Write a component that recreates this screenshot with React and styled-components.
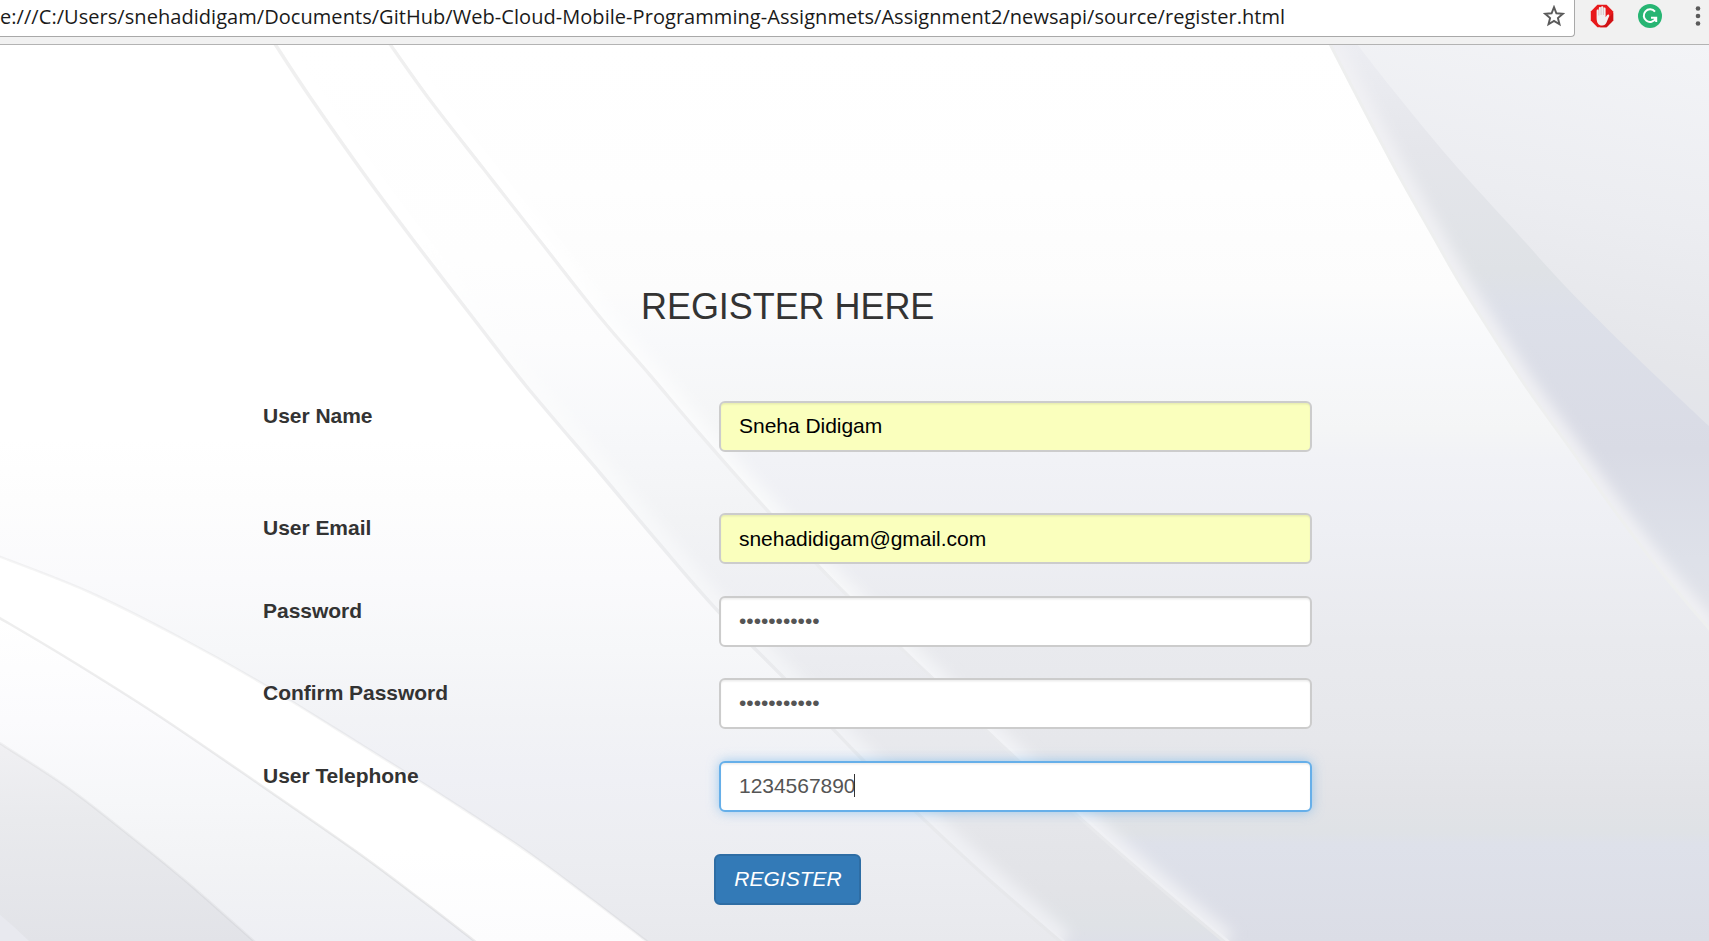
import React from "react";
import styled, { createGlobalStyle, css } from "styled-components";

const GlobalStyle = createGlobalStyle`
  * { box-sizing: border-box; }
  html, body { margin: 0; padding: 0; }
  body {
    background: #fff;
    color: #333;
    font-family: "Liberation Sans", Arial, Helvetica, sans-serif;
    font-size: 21px;
    line-height: 30px;
    overflow: hidden;
  }
`;

const Window = styled.div`
  display: flex;
  flex-direction: column;
  width: 1709px;
  height: 941px;
  overflow: hidden;
`;

const Toolbar = styled.header`
  display: flex;
  align-items: flex-start;
  flex: none;
  height: 45px;
  background: #f1f1f1;
  border-bottom: 1px solid #b3b3b3;
`;

const AddressBar = styled.div`
  display: flex;
  align-items: center;
  justify-content: space-between;
  flex: none;
  width: 1575px;
  height: 37px;
  padding: 0 9px 4px 0;
  background: #fff;
  border: solid #a9a9a9;
  border-width: 0 1px 1px 0;
  border-bottom-right-radius: 4px;
`;

const Url = styled.span`
  padding-top: 2px;
  color: #1a1a1a;
  font-family: "Open Sans", "Noto Sans", sans-serif;
  font-size: 20px;
  line-height: 30px;
  letter-spacing: 0.05px;
  white-space: nowrap;
`;

const Extensions = styled.div`
  display: flex;
  align-items: center;
  flex: none;
  height: 32px;
  padding-left: 15px;
`;

const Icon = styled.svg`
  display: block;
  flex: none;
  width: ${(p) => p.$size}px;
  height: ${(p) => p.$size}px;
  margin-right: ${(p) => p.$after || 0}px;
`;

const Page = styled.main`
  position: relative;
  flex: 1;
  padding-left: 263px;
`;

const Backdrop = styled.svg`
  position: absolute;
  inset: 0;
  width: 1709px;
  height: 896px;
`;

const Content = styled.div`
  position: relative;
  width: 1049px;
`;

const Title = styled.h2`
  margin: 0;
  padding: 242px 0 74px 378px;
  font-size: 36px;
  font-weight: 400;
  line-height: 40px;
  letter-spacing: -0.06px;
  white-space: nowrap;
`;

const Row = styled.div`
  display: flex;
  align-items: flex-start;
  margin-bottom: ${(p) => p.$after}px;
`;

const Label = styled.label`
  width: 456px;
  font-weight: 700;
  letter-spacing: -0.03px;
`;

const Field = styled.div`
  position: relative;
  flex: 1;
`;

const Input = styled.input`
  display: block;
  width: 100%;
  height: 51px;
  padding: ${(p) => p.$pad || "7px 18px 9px"};
  border: 2px solid #ccc;
  border-radius: 6px;
  outline: none;
  background: ${(p) => (p.$filled ? "#faffbd" : "#fff")};
  box-shadow: inset 0 1.5px 1.5px rgba(0, 0, 0, 0.075);
  color: ${(p) => (p.$filled ? "#000" : "#555")};
  font-family: inherit;
  font-size: 21px;
  line-height: 30px;
  letter-spacing: -0.03px;
  ${(p) =>
    p.$active &&
    css`
      border-color: #66afe9;
      box-shadow: inset 0 1.5px 1.5px rgba(0, 0, 0, 0.075), 0 0 12px rgba(102, 175, 233, 0.6);
    `}
`;

const Caret = styled.i`
  position: absolute;
  left: 135px;
  top: 13px;
  width: 1px;
  height: 23px;
  background: #333;
`;

const Submit = styled.button`
  display: block;
  width: 147px;
  height: 51px;
  margin-left: 451px;
  padding: 0 0 1px 1px;
  border: 2px solid #2e6da4;
  border-radius: 6px;
  background: #337ab7;
  color: #fff;
  font-family: inherit;
  font-size: 21px;
  font-style: italic;
  line-height: 30px;
`;

// Smooth curve through a list of points (Catmull-Rom converted to Béziers).
const curve = (pts) => {
  let d = `M${pts[0][0]} ${pts[0][1]}`;
  for (let i = 0; i < pts.length - 1; i++) {
    const a = pts[i - 1] || pts[i];
    const b = pts[i];
    const c = pts[i + 1];
    const e = pts[i + 2] || c;
    d += `C${b[0] + (c[0] - a[0]) / 6} ${b[1] + (c[1] - a[1]) / 6} ${c[0] - (e[0] - b[0]) / 6} ${c[1] - (e[1] - b[1]) / 6} ${c[0]} ${c[1]}`;
  }
  return d;
};

const ribbonLeft = curve([[275, 44], [310, 97], [367, 178], [417, 245], [477, 323], [527, 387], [600, 473], [657, 541], [717, 610], [787, 681], [860, 757], [917, 813], [986, 877], [1062, 943]]);
const ribbonRight = curve([[390, 44], [430, 100], [483, 168], [537, 237], [600, 317], [650, 375], [700, 434], [767, 510], [833, 581], [901, 648], [943, 688], [986, 730], [1076, 814], [1144, 874], [1226, 943]]);
const wingOuter = curve([[1330, 44], [1360, 102], [1397, 172], [1432, 234], [1457, 278], [1490, 331], [1527, 388], [1570, 448], [1617, 514], [1663, 574], [1711, 631]]);
const wingInner = curve([[1357, 44], [1393, 90], [1450, 159], [1517, 233], [1567, 288], [1633, 354], [1711, 428]]);
const arcTop = curve([[-2, 556], [89, 592], [179, 637], [263, 684], [357, 742], [446, 798], [536, 858], [649, 943]]);
const arcMiddle = curve([[-2, 617], [67, 658], [156, 714], [259, 784], [357, 852], [424, 902], [477, 943]]);
const arcLow = curve([[-2, 742], [67, 787], [129, 835], [188, 883], [256, 943]]);

const Fade = ({ id, from, to, stops }) => (
  <linearGradient id={id} gradientUnits="userSpaceOnUse" x1="0" x2="0" y1={from} y2={to}>
    {stops.map(([y, color]) => (
      <stop key={y} offset={(y - from) / (to - from)} stopColor={color} />
    ))}
  </linearGradient>
);

const Waves = () => (
  <Backdrop viewBox="0 45 1709 896" aria-hidden="true">
    <defs>
      <Fade id="base" from={44} to={941} stops={[[44, "#fff"], [440, "#fff"], [500, "#fdfdfd"], [580, "#fafafc"], [650, "#f6f7f9"], [720, "#f2f3f6"], [780, "#eff0f5"], [860, "#ecedf1"], [941, "#e8e9ed"]]} />
      <Fade id="ribbon" from={44} to={941} stops={[[44, "#fff"], [260, "#fefefe"], [340, "#fcfcfd"], [430, "#f7f8fa"], [520, "#f2f3f5"], [600, "#eeeff3"], [680, "#eaebef"], [800, "#e6e7eb"], [890, "#e2e3e7"], [925, "#dfe2e6"], [941, "#dee0e8"]]} />
      <Fade id="field" from={44} to={941} stops={[[44, "#fff"], [190, "#fefefe"], [290, "#fcfcfc"], [340, "#f8f9fb"], [430, "#f4f5f6"], [460, "#f1f2f6"], [530, "#eeeff4"], [640, "#e9eaee"], [740, "#e6e7eb"], [800, "#e2e3e7"], [832, "#dfe2e6"], [845, "#dee1ea"], [941, "#dbdde6"]]} />
      <Fade id="wing" from={44} to={640} stops={[[44, "#ecedf2"], [150, "#e5e6eb"], [270, "#dfe2e6"], [310, "#dde0e9"], [450, "#d9dbe5"], [560, "#dee1e9"], [640, "#e2e3e9"]]} />
      <linearGradient id="sky" gradientUnits="userSpaceOnUse" x1="1600" y1="20" x2="1520" y2="420">
        <stop offset="0" stopColor="#f3f4f7" />
        <stop offset="0.45" stopColor="#ecedf1" />
        <stop offset="0.8" stopColor="#e5e6ea" />
        <stop offset="1" stopColor="#e1e3ea" />
      </linearGradient>
      <Fade id="band" from={556} to={941} stops={[[556, "#fff"], [850, "#fff"], [941, "#fcfcfd"]]} />
      <Fade id="slope" from={617} to={941} stops={[[617, "#fff"], [720, "#fbfbfd"], [800, "#f6f7f9"], [870, "#f2f3f5"], [941, "#eeeff4"]]} />
      <Fade id="hill" from={742} to={941} stops={[[742, "#f0f0f3"], [820, "#e9eaed"], [941, "#e2e3e8"]]} />
      <Fade id="gleam" from={240} to={941} stops={[[240, "#fff"], [500, "#f8f9fa"], [700, "#f2f3f6"], [941, "#eeeff3"]]} />
      <Fade id="crease" from={44} to={941} stops={[[44, "#f0f0f0"], [350, "#efeff0"], [550, "#ecedef"], [700, "#e9eaed"], [800, "#e9eaed"], [941, "#e6e7ea"]]} />
      <clipPath id="clipRibbon"><path d={`${ribbonLeft}L1709 943V44Z`} /></clipPath>
      <clipPath id="clipField"><path d={`${ribbonRight}L1709 943V44Z`} /></clipPath>
      <clipPath id="clipWing"><path d={`${wingOuter}V44Z`} /></clipPath>
      <filter id="soft" filterUnits="userSpaceOnUse" x="0" y="0" width="1750" height="1000"><feGaussianBlur stdDeviation="7" /></filter>
    </defs>
    <rect y="44" width="1709" height="900" fill="url(#base)" />
    <g clipPath="url(#clipRibbon)">
      <path d={`${ribbonLeft}L1709 943V44Z`} fill="url(#ribbon)" />
      <path d={ribbonLeft} fill="none" stroke="url(#gleam)" strokeWidth="26" filter="url(#soft)" />
    </g>
    <g clipPath="url(#clipField)">
      <path d={`${ribbonRight}L1709 943V44Z`} fill="url(#field)" />
      <path d={ribbonRight} fill="none" stroke="url(#gleam)" strokeWidth="24" filter="url(#soft)" />
    </g>
    <path d={ribbonLeft} fill="none" stroke="url(#crease)" strokeWidth="3.500" />
    <path d={ribbonRight} fill="none" stroke="url(#crease)" strokeWidth="3.500" />
    <path d={ribbonLeft} transform="translate(3 -1)" fill="none" stroke="url(#gleam)" strokeOpacity="0.6" strokeWidth="2" />
    <path d={ribbonRight} transform="translate(3 -1)" fill="none" stroke="url(#gleam)" strokeWidth="2.5" />
    <g clipPath="url(#clipWing)">
      <path d={`${wingOuter}V44Z`} fill="url(#wing)" />
      <path d={wingOuter} fill="none" stroke="#f1f1f4" strokeWidth="20" filter="url(#soft)" />
      <path d={`${wingInner}V44Z`} fill="url(#sky)" />
    </g>
    <path d={wingOuter} fill="none" stroke="#eeefef" strokeWidth="3" />
    <path d={`${arcTop}H-2Z`} fill="url(#band)" />
    <path d={arcTop} fill="none" stroke="#777" strokeOpacity="0.07" strokeWidth="2.5" />
    <path d={`${arcMiddle}H-2Z`} fill="url(#slope)" />
    <path d={arcMiddle} fill="none" stroke="#777" strokeOpacity="0.12" strokeWidth="2.5" />
    <path d={`${arcLow}H-2Z`} fill="url(#hill)" />
    <path d={arcLow} fill="none" stroke="#777" strokeOpacity="0.07" strokeWidth="2.5" />
    <path d="M-2 913Q14 926 31 943H-2Z" fill="#e8e9ef" />
  </Backdrop>
);

const StarIcon = () => (
  <Icon $size={22} viewBox="0 0 22 22">
    <path d="M11 2.200 13.400 8.300 19.900 8.800 14.900 13 16.500 19.300 11 15.900 5.500 19.300 7.100 13 2.100 8.800 8.600 8.300Z" fill="none" stroke="#5a5a5a" strokeWidth="1.900" />
  </Icon>
);

const BlockIcon = () => (
  <Icon $size={24} $after={24} viewBox="0 0 24 24">
    <path d="M7.400.8h9.200l6.600 6.600v9.200l-6.600 6.600H7.400L.8 16.600V7.400Z" fill="#e8191b" />
    <path d="M23.200 9v7.600l-6.600 6.600H10Z" fill="#d01215" />
    <path d="M6.600 13.500V6.700c0-1.500 2.200-1.500 2.200 0V4.200c0-1.500 2.300-1.500 2.300 0v-.9c0-1.500 2.300-1.500 2.300 0v1.200c0-1.500 2.200-1.500 2.200 0v8.700l1.500-2.200c.9-1.200 2.600-.4 2.100 1l-2.700 6.500c-.9 2.100-2.200 3-4.300 3-3.900 0-5.600-2.600-5.600-8Z" fill="#f1f1f1" />
    <path d="M8.800 5.500v6M11.100 4v7M13.400 4v7" stroke="#c9a5a5" strokeWidth=".6" />
  </Icon>
);

const GrammarIcon = () => (
  <Icon $size={24} $after={24} viewBox="0 0 24 24">
    <circle cx="12" cy="12" r="12" fill="#27b573" />
    <path d="M17 7.700A6.300 6.300 0 1 0 17.700 14.500M13 13.700H18.200V18" fill="none" stroke="#fff" strokeWidth="2" />
  </Icon>
);

const MenuIcon = () => (
  <Icon $size={24} viewBox="0 0 24 24">
    <g fill="#5a5a5a">
      <circle cx="12" cy="4.500" r="2.300" />
      <circle cx="12" cy="12" r="2.300" />
      <circle cx="12" cy="19.500" r="2.300" />
    </g>
  </Icon>
);

const fields = [
  { id: "name", label: "User Name", value: "Sneha Didigam", filled: true, after: 61 },
  { id: "email", label: "User Email", value: "snehadidigam@gmail.com", filled: true, pad: "8px 18px", after: 32 },
  { id: "password", label: "Password", value: "•••••••••••", after: 31 },
  { id: "confirm", label: "Confirm Password", value: "•••••••••••", after: 32 },
  { id: "phone", label: "User Telephone", value: "1234567890", active: true, after: 42 },
];

export default function App() {
  return (
    <Window>
      <GlobalStyle />
      <Toolbar>
        <AddressBar>
          <Url>e:///C:/Users/snehadidigam/Documents/GitHub/Web-Cloud-Mobile-Programming-Assignmets/Assignment2/newsapi/source/register.html</Url>
          <StarIcon />
        </AddressBar>
        <Extensions>
          <BlockIcon />
          <GrammarIcon />
          <MenuIcon />
        </Extensions>
      </Toolbar>
      <Page>
        <Waves />
        <Content>
          <Title>REGISTER HERE</Title>
          {fields.map((f) => (
            <Row key={f.id} $after={f.after}>
              <Label htmlFor={f.id}>{f.label}</Label>
              <Field>
                <Input id={f.id} defaultValue={f.value} $filled={f.filled} $pad={f.pad} $active={f.active} spellCheck={false} />
                {f.active && <Caret />}
              </Field>
            </Row>
          ))}
          <Submit type="button">REGISTER</Submit>
        </Content>
      </Page>
    </Window>
  );
}
